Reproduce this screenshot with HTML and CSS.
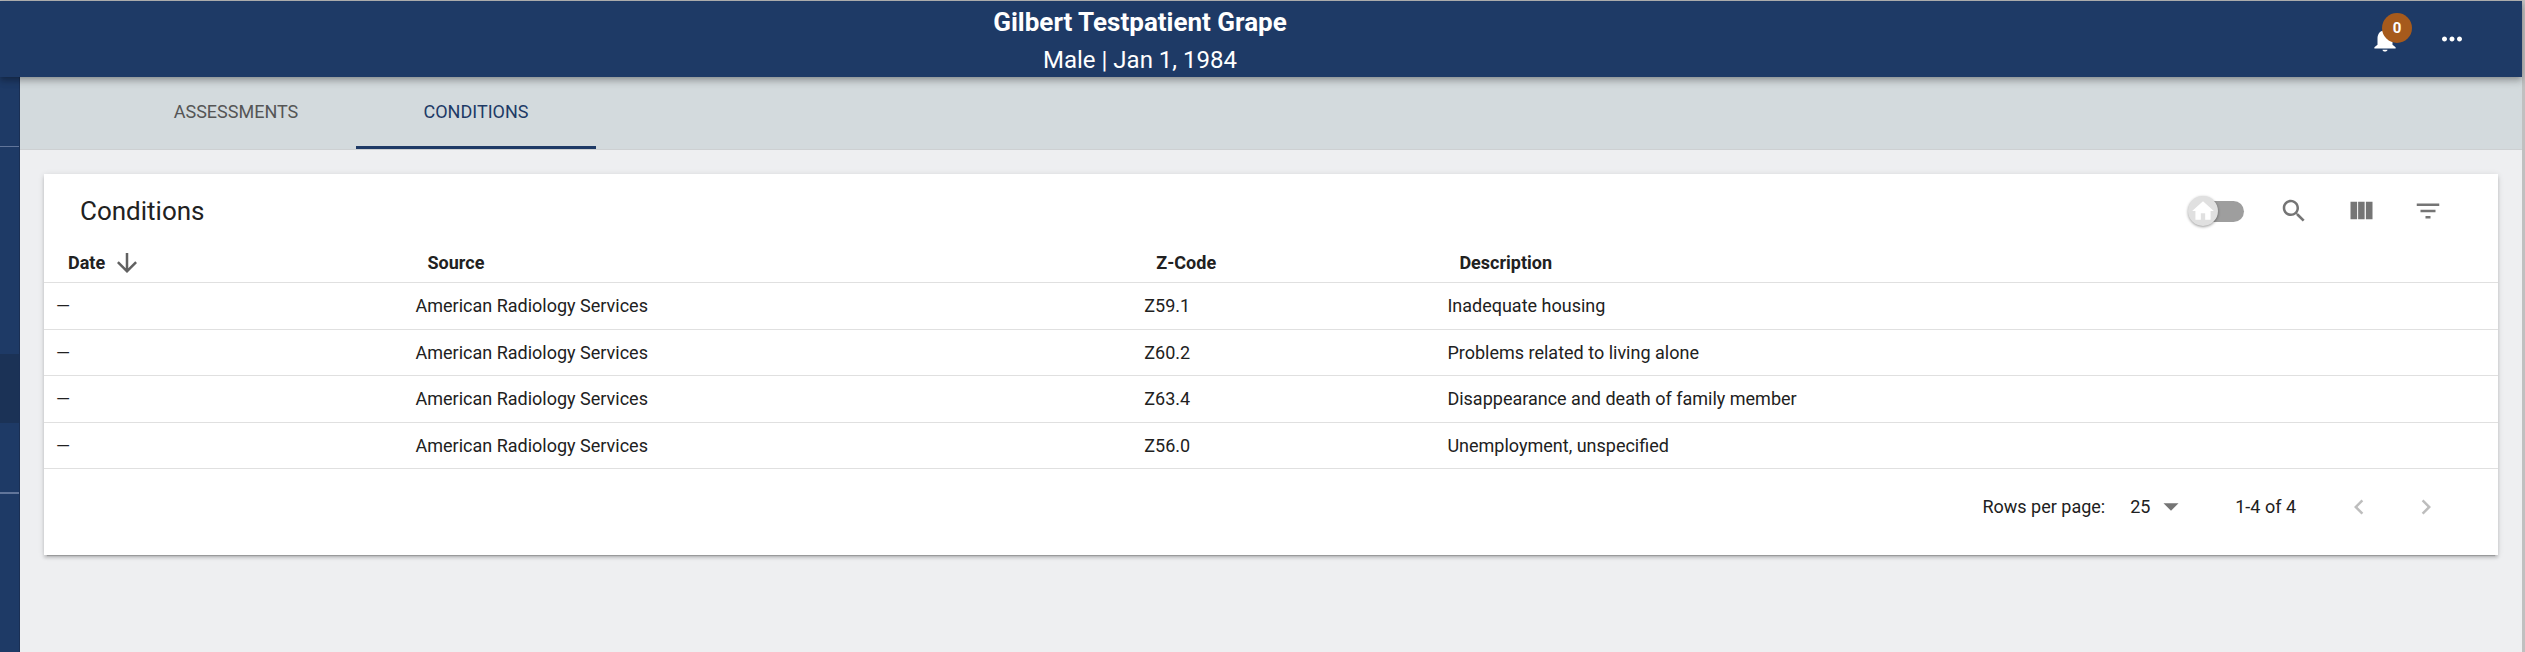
FILE: index.html
```html
<!DOCTYPE html>
<html lang="en">
<head>
    <meta charset="UTF-8">
    <meta name="viewport" content="width=device-width, initial-scale=1.0">
    <title>Conditions</title>
    <link rel="stylesheet" href="styles.css">
</head>
<body>
    <div class="app">
        <!-- Patient Header -->
        <header class="app-bar">
            <div class="patient">
                <h1>Gilbert Testpatient Grape</h1>
                <p>Male | Jan 1, 1984</p>
            </div>
            <div class="app-actions">
                <button class="icon-button" type="button" aria-label="Notifications">
                    <svg viewBox="0 0 24 24"><path d="M12 22c1.1 0 2-.6 2-1.5h-4c0 .9.9 1.500 2 1.500zm6-5.500v-5c0-3.070-1.640-5.640-4.500-6.320V4.500c0-.83-.67-1.500-1.500-1.500s-1.500.67-1.500 1.500v.68C7.630 5.860 6 8.420 6 11.500v5l-2.500 2v1h17v-1l-2.500-2z"/></svg>
                    <span class="badge">0</span>
                </button>
                <button class="icon-button" type="button" aria-label="More options">
                    <svg viewBox="0 0 24 24"><path d="M6 10c-1.100 0-2 .9-2 2s.9 2 2 2 2-.9 2-2-.9-2-2-2zm12 0c-1.100 0-2 .9-2 2s.9 2 2 2 2-.9 2-2-.9-2-2-2zm-6 0c-1.100 0-2 .9-2 2s.9 2 2 2 2-.9 2-2-.9-2-2-2z"/></svg>
                </button>
            </div>
        </header>

        <div class="layout">
            <!-- Collapsed Sidebar -->
            <nav class="sidebar" aria-label="Main">
                <div class="sidebar-top"></div>
                <div class="sidebar-group">
                    <div class="sidebar-item active"></div>
                </div>
            </nav>

            <main class="content">
                <div class="tabs" role="tablist">
                    <button class="tab" type="button" role="tab" aria-selected="false">ASSESSMENTS</button>
                    <button class="tab active" type="button" role="tab" aria-selected="true">CONDITIONS</button>
                </div>

                <section class="card">
                    <div class="toolbar">
                        <h2>Conditions</h2>
                        <label class="switch">
                            <input type="checkbox" aria-label="Show home conditions">
                            <span class="thumb">
                                <svg viewBox="0 0 24 24"><path d="M10 20v-6h4v6h5v-8h3L12 3 2 12h3v8z"/></svg>
                            </span>
                        </label>
                        <button class="icon-button" type="button" aria-label="Search">
                            <svg viewBox="0 0 24 24"><path d="M15.500 14h-.79l-.28-.27C15.410 12.590 16 11.110 16 9.500 16 5.910 13.090 3 9.500 3S3 5.910 3 9.500 5.910 16 9.500 16c1.610 0 3.090-.59 4.230-1.570l.27.28v.79l5 4.990L20.490 19l-4.990-5zm-6 0C7.010 14 5 11.990 5 9.500S7.010 5 9.500 5 14 7.010 14 9.500 11.990 14 9.500 14z"/></svg>
                        </button>
                        <button class="icon-button" type="button" aria-label="View columns">
                            <svg viewBox="0 0 24 24"><path d="M9.700 4.500h5.200v14H9.700zM3.600 4.500h5.300v14H3.600zM15.900 4.500h5.300v14h-5.300z"/></svg>
                        </button>
                        <button class="icon-button" type="button" aria-label="Filter">
                            <svg viewBox="0 0 24 24"><path d="M10 18h4v-2h-4v2zM3 6v2h18V6H3zm3 7h12v-2H6v2z"/></svg>
                        </button>
                    </div>

                    <table class="conditions">
                        <thead>
                            <tr>
                                <th class="col-date" aria-sort="descending">
                                    <span class="sort">Date
                                        <svg viewBox="0 0 24 24"><path d="M20 12l-1.410-1.410L13 16.170V4h-2v12.170l-5.580-5.590L4 12l8 8 8-8z"/></svg>
                                    </span>
                                </th>
                                <th class="col-source">Source</th>
                                <th class="col-code">Z-Code</th>
                                <th>Description</th>
                            </tr>
                        </thead>
                        <tbody>
                            <tr><td>—</td><td>American Radiology Services</td><td>Z59.1</td><td>Inadequate housing</td></tr>
                            <tr><td>—</td><td>American Radiology Services</td><td>Z60.2</td><td>Problems related to living alone</td></tr>
                            <tr><td>—</td><td>American Radiology Services</td><td>Z63.4</td><td>Disappearance and death of family member</td></tr>
                            <tr><td>—</td><td>American Radiology Services</td><td>Z56.0</td><td>Unemployment, unspecified</td></tr>
                        </tbody>
                    </table>

                    <div class="pagination">
                        <label for="rows">Rows per page:</label>
                        <div class="select">
                            <select id="rows">
                                <option>10</option>
                                <option selected>25</option>
                                <option>50</option>
                            </select>
                            <svg viewBox="0 0 24 24"><path d="M6 9l6 6 6-6z"/></svg>
                        </div>
                        <span class="range">1-4 of 4</span>
                        <button class="icon-button" type="button" aria-label="Previous page" disabled>
                            <svg viewBox="0 0 24 24"><path d="M15.410 7.410L14 6l-6 6 6 6 1.410-1.410L10.830 12z"/></svg>
                        </button>
                        <button class="icon-button" type="button" aria-label="Next page" disabled>
                            <svg viewBox="0 0 24 24"><path d="M10 6L8.590 7.410 13.170 12l-4.580 4.590L10 18l6-6z"/></svg>
                        </button>
                    </div>
                </section>
            </main>
        </div>
    </div>
</body>
</html>
```
FILE: styles.css
```css
* {
    box-sizing: border-box;
}

body {
    margin: 0;
    font-family: Roboto, "Liberation Sans", sans-serif;
    font-size: 18px;
    line-height: 24px;
    color: #212121;
    background-color: #c0c0c0;
}

h1, h2, p {
    margin: 0;
}

button, select {
    font: inherit;
    color: inherit;
    border: none;
    background: none;
    cursor: pointer;
}

svg {
    width: 30px;
    height: 30px;
    fill: currentColor;
    flex-shrink: 0;
}

.app {
    display: flex;
    flex-direction: column;
    min-height: 100vh;
    margin-right: 3px;
    border-top: 1px solid #b8b8b8;
    background-color: #eeeff1;
}

/* Patient Header */
.app-bar {
    position: relative;
    z-index: 2;
    display: flex;
    height: 76px;
    background-color: #1e3a66;
    color: white;
    box-shadow: 0 2px 5px -1px rgba(0, 0, 0, 0.2), 0 5px 6px rgba(0, 0, 0, 0.14), 0 1px 12px rgba(0, 0, 0, 0.12);
}

.patient {
    flex: 1;
    text-align: center;
    padding-top: 3px;
}

.patient h1 {
    font-size: 26px;
    font-weight: bold;
    line-height: 36px;
}

.patient p {
    font-size: 24px;
    line-height: 40px;
}

.app-actions {
    display: flex;
    align-items: center;
    justify-content: flex-end;
    gap: 7px;
    width: 242px;
    padding-right: 40px;
}

.icon-button {
    position: relative;
    display: flex;
    align-items: center;
    justify-content: center;
    width: 60px;
    height: 60px;
    padding: 0;
    border-radius: 50%;
}

.badge {
    position: absolute;
    top: 4px;
    right: 3px;
    width: 30px;
    height: 30px;
    border-radius: 50%;
    background-color: #a65a1c;
    font-size: 15px;
    font-weight: bold;
    line-height: 30px;
}

/* Sidebar */
.layout {
    display: flex;
    flex: 1;
}

.sidebar {
    width: 20px;
    flex-shrink: 0;
    background-color: #1e3a66;
    border-right: 1px solid #1a2f54;
}

.sidebar-top {
    height: 70px;
    border-bottom: 1px solid #61759a;
}

.sidebar-group {
    height: 347px;
    padding-top: 207px;
    border-bottom: 2px solid #61759a;
}

.sidebar-item {
    height: 69px;
}

.sidebar-item.active {
    background-color: #1b3256;
}

/* Tabs */
.content {
    flex: 1;
    min-width: 0;
}

.tabs {
    display: flex;
    height: 73px;
    padding-left: 96px;
    background-color: #d3dadd;
    border-bottom: 1px solid #cdd0d2;
}

.tab {
    width: 240px;
    padding: 0;
    border-bottom: 3px solid transparent;
    color: #555;
}

.tab.active {
    color: #1e3a66;
    border-bottom-color: #1e3a66;
}

/* Conditions Card */
.card {
    margin: 24px;
    background-color: white;
    box-shadow: 0 4px 1px -3px rgba(0, 0, 0, 0.2), 0 3px 3px rgba(0, 0, 0, 0.14), 0 1px 6px rgba(0, 0, 0, 0.12);
}

.toolbar {
    display: flex;
    align-items: center;
    gap: 7px;
    height: 74px;
    padding: 0 40px 0 36px;
    color: #757575;
}

.toolbar h2 {
    flex: 1;
    font-size: 26px;
    font-weight: normal;
    color: #212121;
}

.switch {
    position: relative;
    width: 56px;
    height: 30px;
    margin-right: 13px;
    cursor: pointer;
}

.switch input {
    appearance: none;
    display: block;
    width: 46px;
    height: 21px;
    margin: 5px 0 0 10px;
    border-radius: 11px;
    background-color: #9e9e9e;
}

.thumb {
    position: absolute;
    top: 0;
    left: 0;
    display: flex;
    align-items: center;
    justify-content: center;
    width: 30px;
    height: 30px;
    border-radius: 50%;
    background-color: #e0e0e0;
    color: white;
    box-shadow: 0 1px 3px rgba(0, 0, 0, 0.4);
}

.thumb svg {
    width: 26px;
    height: 26px;
}

.conditions {
    width: 100%;
    table-layout: fixed;
    border-collapse: separate;
    border-spacing: 0;
}

.conditions th, .conditions td {
    height: 46px;
    padding: 0 12px;
    text-align: left;
    border-bottom: 1px solid #e0e0e0;
}

.conditions tr:nth-child(odd) td {
    height: 47px;
}

.conditions th {
    height: 35px;
    padding: 0 24px 4px;
}

.col-date {
    width: 14.65%;
}

.col-source {
    width: 29.7%;
}

.col-code {
    width: 12.35%;
}

.sort {
    display: flex;
    align-items: center;
    gap: 7px;
    height: 24px;
}

.sort svg {
    color: #616161;
}

/* Pagination */
.pagination {
    display: flex;
    align-items: center;
    justify-content: flex-end;
    gap: 7px;
    padding: 8px 42px 18px 0;
}

.select {
    position: relative;
    display: flex;
    align-items: center;
    margin: 0 42px 0 18px;
}

.select select {
    appearance: none;
    width: 56px;
    height: 30px;
    padding: 0;
}

.select svg {
    position: absolute;
    right: 0;
    color: #757575;
    pointer-events: none;
}

.range {
    margin-right: 26px;
}

.pagination .icon-button {
    color: #bdbdbd;
}
```
